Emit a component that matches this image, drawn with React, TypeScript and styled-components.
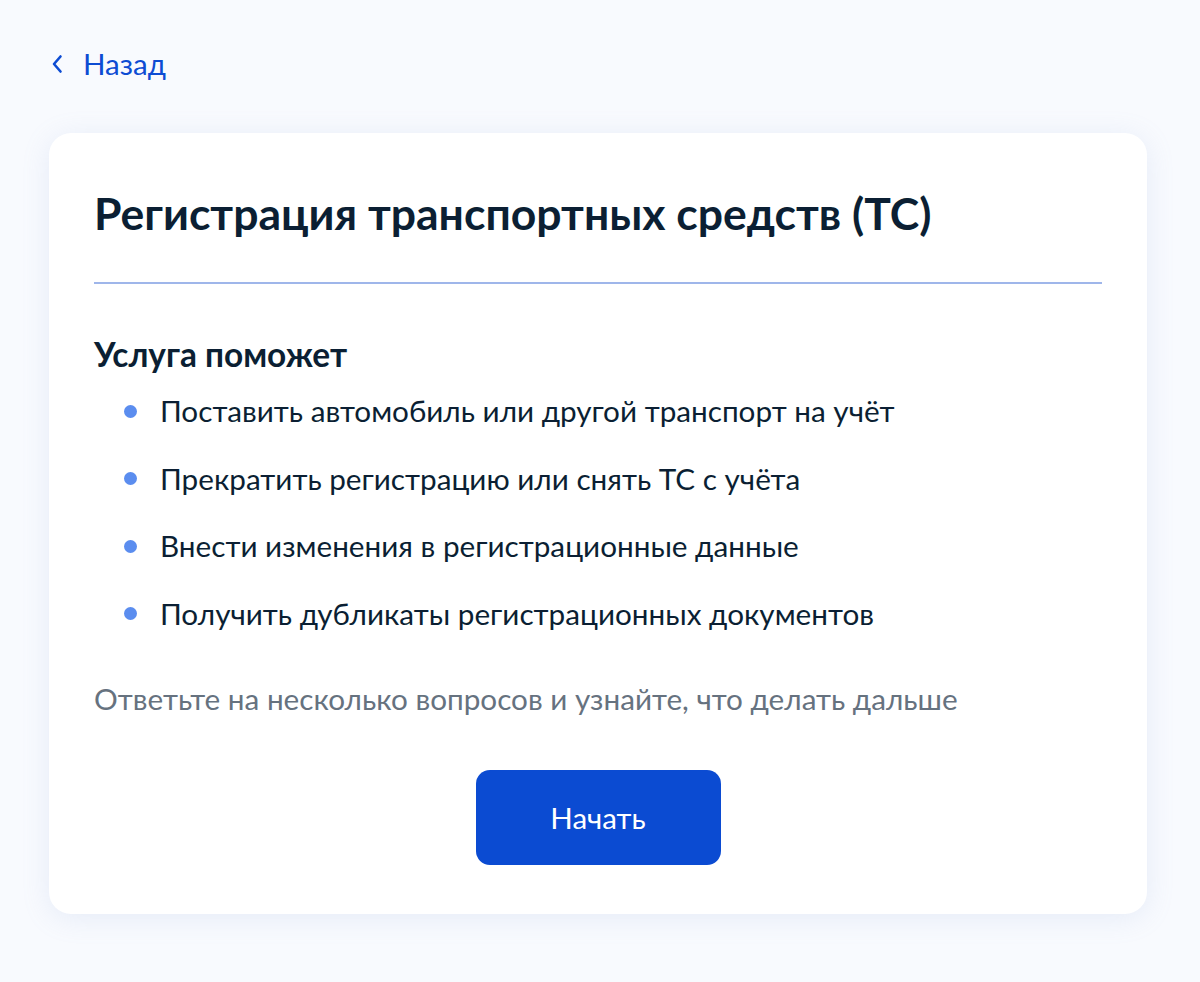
import React from 'react';
import styled, { createGlobalStyle } from 'styled-components';

const GlobalStyle = createGlobalStyle`
  html, body {
    margin: 0;
    padding: 0;
    background: #f8fafe;
  }
  body {
    font-family: Lato, "Noto Sans", "Liberation Sans", sans-serif;
    color: #0b1f33;
  }
`;

const Page = styled.div`
  min-height: 982px;
  padding: 44px 49px 0 49px;
  box-sizing: border-box;
`;

const BackLink = styled.a`
  display: inline-flex;
  align-items: center;
  gap: 20px;
  margin-left: 2px;
  color: #0d4cd3;
  font-size: 29.5px;
  line-height: 40px;
  text-decoration: none;
  cursor: pointer;
`;

const Card = styled.section`
  margin-top: 49px;
  width: 1098px;
  box-sizing: border-box;
  background: #ffffff;
  border-radius: 22px;
  box-shadow: 0 4px 28px rgba(136, 160, 210, 0.16);
  padding: 54px 45px 49px 45px;
`;

const Title = styled.h1`
  margin: 0;
  font-size: 44.5px;
  line-height: 52px;
  font-weight: 700;
  color: #0b1f33;
`;

const Divider = styled.hr`
  border: 0;
  height: 2px;
  background: #9fb6ea;
  margin: 43px 0 48px 0;
`;

const Subtitle = styled.h2`
  margin: 0;
  font-size: 33.4px;
  line-height: 44px;
  font-weight: 700;
`;

const List = styled.ul`
  list-style: none;
  margin: 15px 0 0 0;
  padding: 0 0 0 30px;
  display: flex;
  flex-direction: column;
  gap: 27.5px;
`;

const Item = styled.li`
  display: flex;
  align-items: center;
  gap: 23px;
  font-size: 29.7px;
  line-height: 40px;
  color: #0b1f33;
`;

const Dot = styled.span`
  width: 13px;
  height: 13px;
  border-radius: 50%;
  background: #5b8def;
  flex-shrink: 0;
`;

const Hint = styled.p`
  margin: 45px 0 0 0;
  font-size: 29.7px;
  line-height: 40px;
  color: #66727f;
`;

const Actions = styled.div`
  display: flex;
  justify-content: center;
  margin-top: 51px;
`;

const Button = styled.button`
  width: 245px;
  height: 95px;
  border: 0;
  border-radius: 14px;
  background: #0b4bd2;
  color: #ffffff;
  font-family: inherit;
  font-size: 29.5px;
  font-weight: 400;
  cursor: pointer;
`;

const items = [
  'Поставить автомобиль или другой транспорт на учёт',
  'Прекратить регистрацию или снять ТС с учёта',
  'Внести изменения в регистрационные данные',
  'Получить дубликаты регистрационных документов',
];

export default function App() {
  return (
    <>
      <GlobalStyle />
      <Page>
        <BackLink>
          <svg width="12" height="20" viewBox="0 0 12 20" fill="none">
            <path d="M9.5 2.5L3 10l6.5 7.5" stroke="#0d4cd3" strokeWidth="2.6" strokeLinecap="round" strokeLinejoin="round" />
          </svg>
          Назад
        </BackLink>
        <Card>
          <Title>Регистрация транспортных средств (ТС)</Title>
          <Divider />
          <Subtitle>Услуга поможет</Subtitle>
          <List>
            {items.map((t) => (
              <Item key={t}>
                <Dot />
                {t}
              </Item>
            ))}
          </List>
          <Hint>Ответьте на несколько вопросов и узнайте, что делать дальше</Hint>
          <Actions>
            <Button>Начать</Button>
          </Actions>
        </Card>
      </Page>
    </>
  );
}
